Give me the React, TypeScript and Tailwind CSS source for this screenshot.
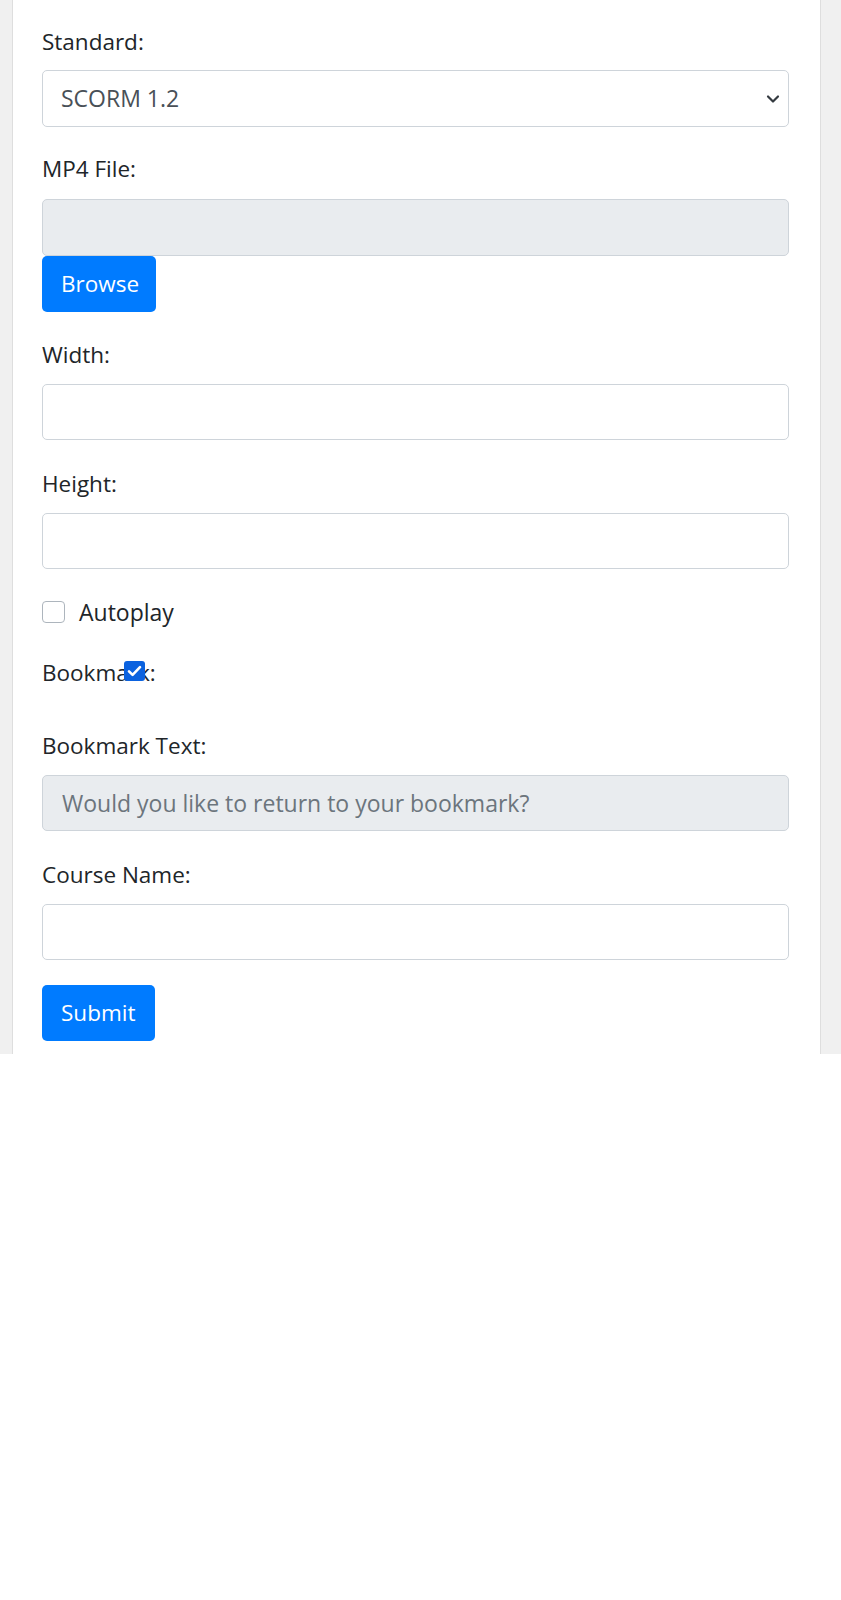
import { ChangeEvent, useState } from "react";

const font = { fontFamily: '"Open Sans", "Noto Sans", sans-serif' };

function Label({ children, className = "" }: { children: React.ReactNode; className?: string }) {
  return (
    <label className={`block h-[30px] text-[22.5px] leading-[30px] text-[#212529] ${className}`}>{children}</label>
  );
}

function TextInput({ value, onChange }: { value: string; onChange: (e: ChangeEvent<HTMLInputElement>) => void }) {
  return (
    <input
      type="text"
      value={value}
      onChange={onChange}
      className="mt-[14px] block h-[56px] w-full rounded-[5px] border border-[#ced4da] bg-white px-[19px] text-[23px] text-[#495057] outline-none"
    />
  );
}

export default function App() {
  const [width, setWidth] = useState("");
  const [height, setHeight] = useState("");
  const [courseName, setCourseName] = useState("");
  const [autoplay, setAutoplay] = useState(false);
  const [bookmark, setBookmark] = useState(true);

  return (
    <div style={font} className="flex bg-[#f0f0f0] pl-[12px] pr-[20px]">
      <form
        className="w-[809px] border-x border-[#dedede] bg-white pb-[13px] pl-[29px] pr-[31px] pt-[27px]"
        onSubmit={(e) => e.preventDefault()}
      >
        <Label>Standard:</Label>
        <div className="relative mt-[13px] h-[57px] w-full rounded-[5px] border border-[#ced4da] bg-white">
          <select className="h-full w-full appearance-none bg-transparent px-[18px] text-[23px] text-[#495057] outline-none">
            <option>SCORM 1.2</option>
            <option>SCORM 2004</option>
          </select>
          <svg
            className="pointer-events-none absolute right-[8px] top-[23px]"
            width="14"
            height="10"
            viewBox="0 0 14 10"
            fill="none"
          >
            <path d="M2 2.5l5 5 5-5" stroke="#343a40" strokeWidth="2.2" strokeLinecap="round" strokeLinejoin="round" />
          </svg>
        </div>

        <Label className="mt-[27px]">MP4 File:</Label>
        <div className="mt-[15px] h-[57px] w-full rounded-[5px] border border-[#ced4da] bg-[#e9ecef]" />
        <button
          type="button"
          className="block h-[56px] w-[114px] rounded-[5px] bg-[#007bff] pl-[19px] text-left text-[22.5px] text-white"
        >
          Browse
        </button>

        <Label className="mt-[28px]">Width:</Label>
        <TextInput value={width} onChange={(e) => setWidth(e.target.value)} />

        <Label className="mt-[29px]">Height:</Label>
        <TextInput value={height} onChange={(e) => setHeight(e.target.value)} />

        <div className="mt-[28px] flex h-[30px] items-center">
          <button
            type="button"
            onClick={() => setAutoplay(!autoplay)}
            className={`h-[22px] w-[23px] rounded-[4px] border ${autoplay ? "border-[#0b62df] bg-[#0b62df]" : "border-[#adb5bd] bg-white"}`}
          />
          <span className="ml-[14px] text-[23px] text-[#212529]">Autoplay</span>
        </div>

        <div className="relative mt-[31px] h-[30px]">
          <span className="text-[22.5px] leading-[30px] text-[#212529]">Bookmark:</span>
          <button
            type="button"
            onClick={() => setBookmark(!bookmark)}
            className={`absolute left-[82px] top-[3px] flex h-[20px] w-[21px] items-center justify-center rounded-[3px] ${bookmark ? "bg-[#0b62df]" : "border border-[#767676] bg-white"}`}
          >
            {bookmark && (
              <svg width="15" height="12" viewBox="0 0 15 12" fill="none">
                <path d="M2 6.3l3.6 3.6L13 2.2" stroke="white" strokeWidth="2.6" strokeLinecap="round" strokeLinejoin="round" />
              </svg>
            )}
          </button>
        </div>

        <Label className="mt-[43px]">Bookmark Text:</Label>
        <input
          type="text"
          disabled
          placeholder="Would you like to return to your bookmark?"
          className="mt-[14px] block h-[56px] w-full rounded-[5px] border border-[#ced4da] bg-[#e9ecef] px-[19px] text-[23px] text-[#495057] placeholder:text-[#6c757d]"
        />

        <Label className="mt-[29px]">Course Name:</Label>
        <TextInput value={courseName} onChange={(e) => setCourseName(e.target.value)} />

        <button
          type="submit"
          className="mt-[25px] block h-[56px] w-[113px] rounded-[5px] bg-[#007bff] pl-[19px] text-left text-[22.5px] text-white"
        >
          Submit
        </button>
      </form>
    </div>
  );
}
